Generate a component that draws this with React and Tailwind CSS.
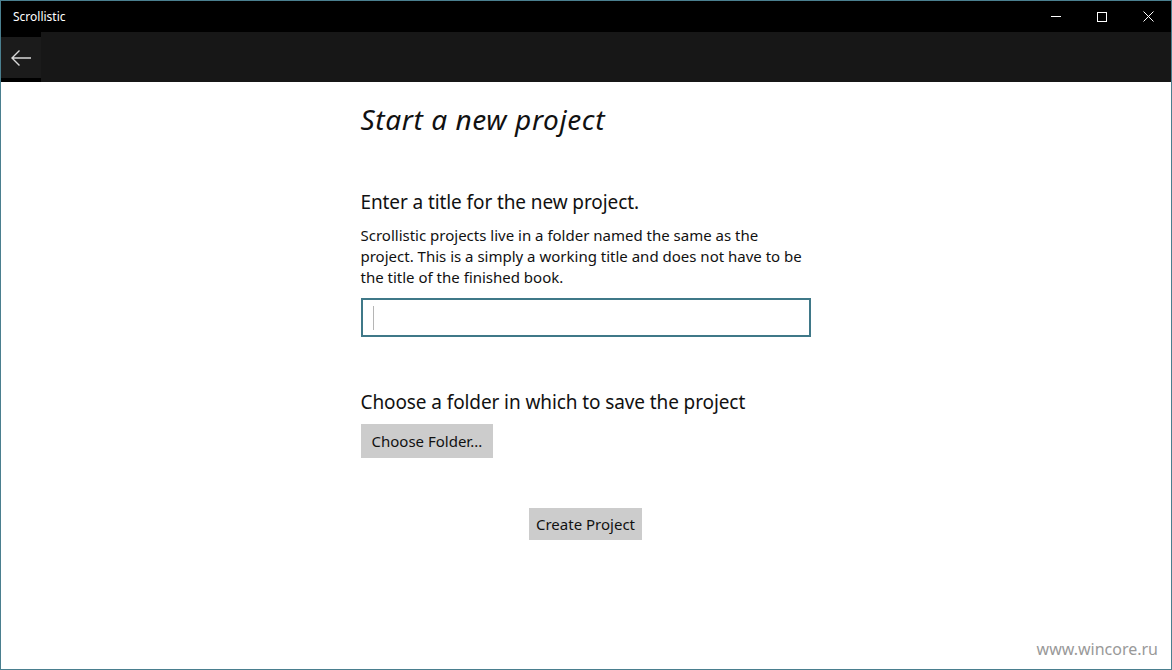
export default function App() {
  const ui = { fontFamily: '"Noto Sans", "Open Sans", Arial, sans-serif' }

  return (
    <div className="w-[1172px] h-[670px] border border-[#4a7f8f] bg-white flex flex-col overflow-hidden relative" style={ui}>
      {/* title bar */}
      <div className="h-[31px] bg-black flex items-center text-white shrink-0">
        <span className="pl-3 text-[12px]">Scrollistic</span>
        <div className="ml-auto flex h-full">
          <div className="w-[46px] h-full flex items-center justify-center">
            <div className="w-[10px] h-px bg-white" />
          </div>
          <div className="w-[46px] h-full flex items-center justify-center">
            <div className="w-[10px] h-[10px] border border-white" />
          </div>
          <div className="w-[46px] h-full flex items-center justify-center">
            <svg width="11" height="11" viewBox="0 0 11 11">
              <path d="M0.5 0.5 L10.5 10.5 M10.5 0.5 L0.5 10.5" stroke="white" strokeWidth="1" />
            </svg>
          </div>
        </div>
      </div>

      {/* command bar */}
      <div className="h-[50px] bg-[#171717] flex shrink-0">
        <div className="w-[40px] flex flex-col bg-black">
          <div className="h-[5px]" />
          <div className="flex-1 bg-[#1b1b1b] flex items-center justify-center">
            <svg width="22" height="18" viewBox="0 0 22 18" fill="none">
              <path d="M21 9 H2 M9.5 1.5 L2 9 L9.5 16.5" stroke="#d8d8d8" strokeWidth="1.4" />
            </svg>
          </div>
          <div className="h-[4px]" />
        </div>
      </div>

      {/* content */}
      <div className="flex-1 flex justify-center">
        <div className="w-[450px] ml-[-1px] flex flex-col text-[#111]">
          <h1 className="mt-[18px] text-[28px] italic font-normal leading-[38px] tracking-[0.6px]">Start a new project</h1>
          <h2 className="mt-[51px] text-[19px] leading-[26px] tracking-[-0.1px]">Enter a title for the new project.</h2>
          <p className="mt-[10px] text-[15px] leading-[21px] pr-[4px]">
            Scrollistic projects live in a folder named the same as the project. This is a simply a working title and does not have to be the title of the finished book.
          </p>
          <div className="mt-[10px] h-[39px] border-2 border-[#3f7888] flex items-center pl-[10px]">
            <div className="w-px h-[24px] bg-[#b5b5b5]" />
          </div>
          <h2 className="mt-[52px] text-[19px] leading-[26px] tracking-[-0.1px]">Choose a folder in which to save the project</h2>
          <div className="mt-[9px]">
            <button className="h-[34px] px-[11px] bg-[#cccccc] text-[15px] text-[#111]">Choose Folder...</button>
          </div>
          <div className="mt-[50px] flex justify-center">
            <button className="h-[32px] px-[7px] bg-[#cccccc] text-[15px] text-[#111]">Create Project</button>
          </div>
        </div>
      </div>

      <div className="absolute right-[13px] bottom-[8px] text-[16px] text-[#999999]">www.wincore.ru</div>
    </div>
  )
}
